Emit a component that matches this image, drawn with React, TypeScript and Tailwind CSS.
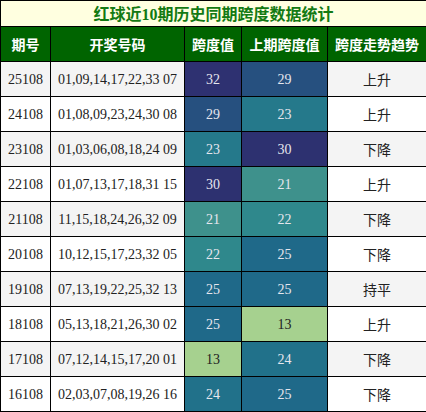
import React from 'react';

type Row = {
  issue: string;
  balls: string;
  span: number;
  prev: number;
  trend: string;
};

const rows: Row[] = [
  { issue: '25108', balls: '01,09,14,17,22,33 07', span: 32, prev: 29, trend: '上升' },
  { issue: '24108', balls: '01,08,09,23,24,30 08', span: 29, prev: 23, trend: '上升' },
  { issue: '23108', balls: '01,03,06,08,18,24 09', span: 23, prev: 30, trend: '下降' },
  { issue: '22108', balls: '01,07,13,17,18,31 15', span: 30, prev: 21, trend: '上升' },
  { issue: '21108', balls: '11,15,18,24,26,32 09', span: 21, prev: 22, trend: '下降' },
  { issue: '20108', balls: '10,12,15,17,23,32 05', span: 22, prev: 25, trend: '下降' },
  { issue: '19108', balls: '07,13,19,22,25,32 13', span: 25, prev: 25, trend: '持平' },
  { issue: '18108', balls: '05,13,18,21,26,30 02', span: 25, prev: 13, trend: '上升' },
  { issue: '17108', balls: '07,12,14,15,17,20 01', span: 13, prev: 24, trend: '下降' },
  { issue: '16108', balls: '02,03,07,08,19,26 16', span: 24, prev: 25, trend: '下降' },
];

// heat colours for span values
const spanClass: Record<number, string> = {
  32: 'bg-[#2e3171] text-[#e6e6ee]',
  30: 'bg-[#2d3170] text-[#e6e6ee]',
  29: 'bg-[#26507f] text-[#e6e6ee]',
  25: 'bg-[#1f6989] text-[#e6e6ee]',
  24: 'bg-[#21718a] text-[#e6e6ee]',
  23: 'bg-[#25798b] text-[#e6e6ee]',
  22: 'bg-[#2f888c] text-[#e6e6ee]',
  21: 'bg-[#3e918c] text-[#e6e6ee]',
  13: 'bg-[#a6d18f] text-[#222]',
};

const serif = "font-['Liberation_Serif','Noto_Sans_CJK_SC',serif]";
const cjk = "font-['Noto_Sans_CJK_SC','Liberation_Sans',sans-serif]";

export default function App() {
  return (
    <div className="w-[426px] h-[412px] bg-white">
      <table className="w-[426px] table-fixed border-collapse">
        <colgroup>
          <col className="w-[50px]" />
          <col className="w-[134px]" />
          <col className="w-[57px]" />
          <col className="w-[86px]" />
          <col className="w-[99px]" />
        </colgroup>
        <thead>
          <tr className="h-[26px]">
            <th
              colSpan={5}
              className={`border border-black bg-[#ffffe0] text-[#137a13] text-[16px] font-bold leading-none p-0 ${cjk}`}
            >
              红球近<span className={serif}>10</span>期历史同期跨度数据统计
            </th>
          </tr>
          <tr className={`h-[35px] bg-[#006400] text-white text-[14px] font-bold ${cjk}`}>
            <th className="border border-black p-0">期号</th>
            <th className="border border-black p-0">开奖号码</th>
            <th className="border border-black p-0">跨度值</th>
            <th className="border border-black p-0">上期跨度值</th>
            <th className="border border-black p-0">跨度走势趋势</th>
          </tr>
        </thead>
        <tbody>
          {rows.map((r, i) => (
            <tr key={r.issue} className={`h-[35px] ${i % 2 === 0 ? 'bg-[#f4f4f4]' : 'bg-white'}`}>
              <td className={`border border-black p-0 text-center text-[14px] text-[#222] ${serif}`}>{r.issue}</td>
              <td className={`border border-black p-0 text-center text-[14px] text-[#222] ${serif}`}>{r.balls}</td>
              <td className={`border border-black p-0 text-center text-[14px] ${serif} ${spanClass[r.span]}`}>{r.span}</td>
              <td className={`border border-black p-0 text-center text-[14px] ${serif} ${spanClass[r.prev]}`}>{r.prev}</td>
              <td className={`border border-black p-0 text-center text-[14px] text-[#222] ${cjk}`}>{r.trend}</td>
            </tr>
          ))}
        </tbody>
      </table>
    </div>
  );
}
